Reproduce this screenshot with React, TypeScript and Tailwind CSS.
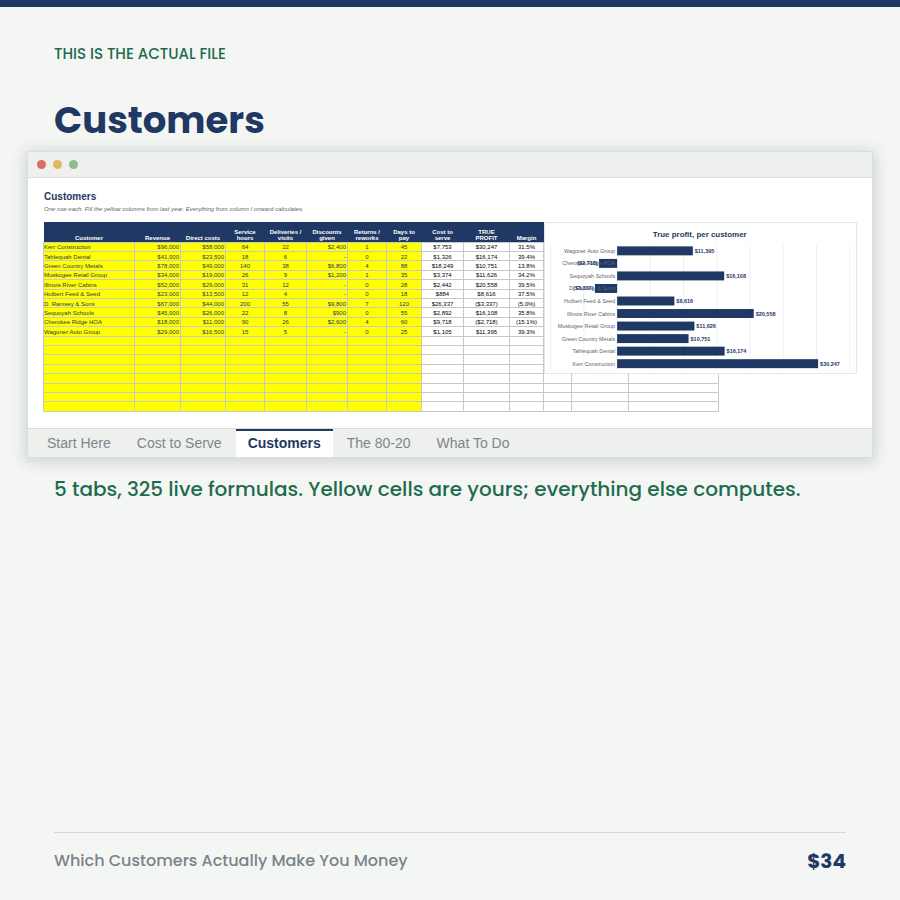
import clsx from "clsx";

const COLUMNS = [
  { label: ["Customer"], width: "w-[91px]" },
  { label: ["Revenue"], width: "w-[46px]" },
  { label: ["Direct costs"], width: "w-[45px]" },
  { label: ["Service", "hours"], width: "w-[39px]" },
  { label: ["Deliveries /", "visits"], width: "w-[42px]" },
  { label: ["Discounts", "given"], width: "w-[41px]" },
  { label: ["Returns /", "reworks"], width: "w-[39px]" },
  { label: ["Days to", "pay"], width: "w-[35px]" },
  { label: ["Cost to", "serve"], width: "w-[42px]" },
  { label: ["TRUE", "PROFIT"], width: "w-[46px]" },
  { label: ["Margin"], width: "w-[34px]" },
  { label: [], width: "w-[28px]" },
  { label: [], width: "w-[57px]" },
  { label: [], width: "w-[90px]" },
];

const INPUT_COLUMNS = 8;
const EMPTY_ROWS = 8;

const ROWS = [
  ["Kerr Construction", "$96,000", "$58,000", "64", "22", "$2,400", "1", "45", "$7,753", "$30,247", "31.5%"],
  ["Tahlequah Dental", "$41,000", "$23,500", "18", "6", "-", "0", "22", "$1,326", "$16,174", "39.4%"],
  ["Green Country Metals", "$78,000", "$49,000", "140", "38", "$6,800", "4", "88", "$18,249", "$10,751", "13.8%"],
  ["Muskogee Retail Group", "$34,000", "$19,000", "26", "9", "$1,200", "1", "35", "$3,374", "$11,626", "34.2%"],
  ["Illinois River Cabins", "$52,000", "$29,000", "31", "12", "-", "0", "28", "$2,442", "$20,558", "39.5%"],
  ["Hulbert Feed & Seed", "$23,000", "$13,500", "12", "4", "-", "0", "18", "$884", "$8,616", "37.5%"],
  ["D. Ramsey & Sons", "$67,000", "$44,000", "200", "55", "$9,800", "7", "120", "$26,337", "($3,337)", "(5.0%)"],
  ["Sequoyah Schools", "$45,000", "$26,000", "22", "8", "$900", "0", "55", "$2,892", "$16,108", "35.8%"],
  ["Cherokee Ridge HOA", "$18,000", "$11,000", "90", "26", "$2,600", "4", "60", "$9,718", "($2,718)", "(15.1%)"],
  ["Wagoner Auto Group", "$29,000", "$16,500", "15", "5", "-", "0", "25", "$1,105", "$11,395", "39.3%"],
];

const PROFITS = [
  { name: "Wagoner Auto Group", value: 11395 },
  { name: "Cherokee Ridge HOA", value: -2718 },
  { name: "Sequoyah Schools", value: 16108 },
  { name: "D. Ramsey & Sons", value: -3337 },
  { name: "Hulbert Feed & Seed", value: 8616 },
  { name: "Illinois River Cabins", value: 20558 },
  { name: "Muskogee Retail Group", value: 11626 },
  { name: "Green Country Metals", value: 10751 },
  { name: "Tahlequah Dental", value: 16174 },
  { name: "Kerr Construction", value: 30247 },
];

const TABS = ["Start Here", "Cost to Serve", "Customers", "The 80-20", "What To Do"];

const ZERO_X = 145;
const UNITS_PER_DOLLAR = 0.01336;

function formatMoney(value: number) {
  const amount = `$${Math.abs(value).toLocaleString("en-US")}`;
  return value < 0 ? `(${amount})` : amount;
}

function alignment(column: number) {
  if (column === 0) return "text-left";
  if (column === 1 || column === 2 || column === 5) return "pr-px text-right";
  return "text-center";
}

function ProfitChart() {
  const ticks = [-10000, -5000, 0, 5000, 10000, 15000, 20000, 25000, 30000, 35000];

  return (
    <svg
      viewBox="0 0 626 302"
      className="block w-full"
      role="img"
      aria-label="True profit, per customer"
    >
      <text x="311" y="29" textAnchor="middle" className="fill-[#1f3864] text-[16px] font-bold">
        True profit, per customer
      </text>

      {ticks.map((tick) => {
        const x = ZERO_X + tick * UNITS_PER_DOLLAR;
        return <line key={tick} x1={x} x2={x} y1="44" y2="296" stroke="#f0f1f4" strokeWidth="2" />;
      })}

      {PROFITS.map(({ name, value }, i) => {
        const center = 56 + i * 25.2;
        const end = ZERO_X + value * UNITS_PER_DOLLAR;
        return (
          <g key={name}>
            <rect
              x={Math.min(ZERO_X, end)}
              y={center - 9}
              width={Math.abs(end - ZERO_X)}
              height="18"
              className="fill-[#1f3864]"
            />
            <text x="141" y={center + 4} textAnchor="end" className="fill-[#5c6470] text-[11px]">
              {name}
            </text>
            <text
              x={value < 0 ? end - 3 : end + 4}
              y={center + 4}
              textAnchor={value < 0 ? "end" : "start"}
              className="fill-[#1f3864] text-[11px] font-bold"
            >
              {formatMoney(value)}
            </text>
          </g>
        );
      })}
    </svg>
  );
}

function CustomerTable() {
  return (
    <table className="h-[190px] w-[83%] table-fixed border-collapse text-[6px] leading-[6px] text-black">
      <colgroup>
        {COLUMNS.map((column, i) => (
          <col key={i} className={column.width} />
        ))}
      </colgroup>
      <thead>
        <tr className="h-5 text-white">
          {COLUMNS.map((column, i) => (
            <th
              key={i}
              className={clsx(
                "p-0 pb-px text-center align-bottom font-bold whitespace-nowrap",
                column.label.length > 0 && "bg-[#1f3864]"
              )}
            >
              {column.label.map((line) => (
                <span key={line} className="block">
                  {line}
                </span>
              ))}
            </th>
          ))}
        </tr>
      </thead>
      <tbody>
        {ROWS.map((row) => (
          <tr key={row[0]} className="h-[9px]">
            {COLUMNS.map((_, i) => (
              <td
                key={i}
                className={clsx(
                  "border border-[#c8c8c8] p-0 pt-px whitespace-nowrap",
                  alignment(i),
                  i < INPUT_COLUMNS && "bg-[#ffff00] text-[#1f3864]"
                )}
              >
                {row[i]}
              </td>
            ))}
          </tr>
        ))}
        {Array.from({ length: EMPTY_ROWS }, (_, r) => (
          <tr key={r} className="h-[9px]">
            {COLUMNS.map((_, i) => (
              <td
                key={i}
                className={clsx("border border-[#c8c8c8] p-0", i < INPUT_COLUMNS && "bg-[#ffff00]")}
              />
            ))}
          </tr>
        ))}
      </tbody>
    </table>
  );
}

function WorkbookWindow() {
  return (
    <section className="mx-[27px] border border-[#d9dedb] bg-white font-['Liberation_Sans',Arial,sans-serif] shadow-[0_2px_14px_2px_rgba(31,56,50,0.18)]">
      {/* Title bar */}
      <div className="flex h-[26px] items-center gap-[7px] border-b border-[#d9dedb] bg-[#eef0ee] px-[9px]">
        <span className="size-[9px] rounded-full bg-[#dd6b66]" />
        <span className="size-[9px] rounded-full bg-[#e0b863]" />
        <span className="size-[9px] rounded-full bg-[#8fbc8b]" />
      </div>

      {/* Sheet */}
      <div className="px-[15px] pt-3 pb-4">
        <h2 className="pl-px text-[10px] leading-[14px] font-bold text-[#1f3864]">Customers</h2>
        <p className="pl-px text-[6px] leading-[10px] text-[#5c6470] italic">
          One row each. Fill the yellow columns from last year. Everything from column I onward calculates.
        </p>
        <div className="relative mt-2">
          <CustomerTable />
          {/* Chart floats over the right-hand columns */}
          <div className="absolute top-0 right-0 left-[61.5%] border border-[#e4e6ea] bg-white">
            <ProfitChart />
          </div>
        </div>
      </div>

      {/* Sheet tabs */}
      <nav className="flex h-[29px] gap-[2px] border-t border-[#d9dedb] bg-[#eef0ee] pl-[7px]">
        {TABS.map((tab) => (
          <button
            key={tab}
            type="button"
            className={clsx(
              "border-t-2 px-3 pb-[2px] text-[14px] leading-5",
              tab === "Customers"
                ? "border-[#1f3864] bg-white font-bold text-[#1f3864]"
                : "border-transparent text-[#7d858c]"
            )}
          >
            {tab}
          </button>
        ))}
      </nav>
    </section>
  );
}

export default function App() {
  return (
    <main className="flex min-h-screen flex-col border-t-[7px] border-[#1f3864] bg-[#f4f6f3] font-['Poppins','Inter',sans-serif]">
      <header className="px-[54px] pt-[35px]">
        <p className="text-[15px] leading-6 font-medium text-[#1e6b4f]">THIS IS THE ACTUAL FILE</p>
        <h1 className="mt-[29px] text-[37px] leading-[50px] font-bold text-[#1f3864]">Customers</h1>
      </header>

      <div className="mt-[6px]">
        <WorkbookWindow />
      </div>

      <p className="mt-[15px] px-[54px] text-[20px] leading-8 font-medium text-[#1e6b4f]">
        5 tabs, 325 live formulas. Yellow cells are yours; everything else computes.
      </p>

      <footer className="mx-[54px] mt-auto flex h-[68px] items-start justify-between border-t border-[#d5dad7] pt-3">
        <span className="text-[16px] leading-8 font-medium text-[#7a838a]">
          Which Customers Actually Make You Money
        </span>
        <span className="text-[20px] leading-8 font-bold text-[#1f3864]">$34</span>
      </footer>
    </main>
  );
}
